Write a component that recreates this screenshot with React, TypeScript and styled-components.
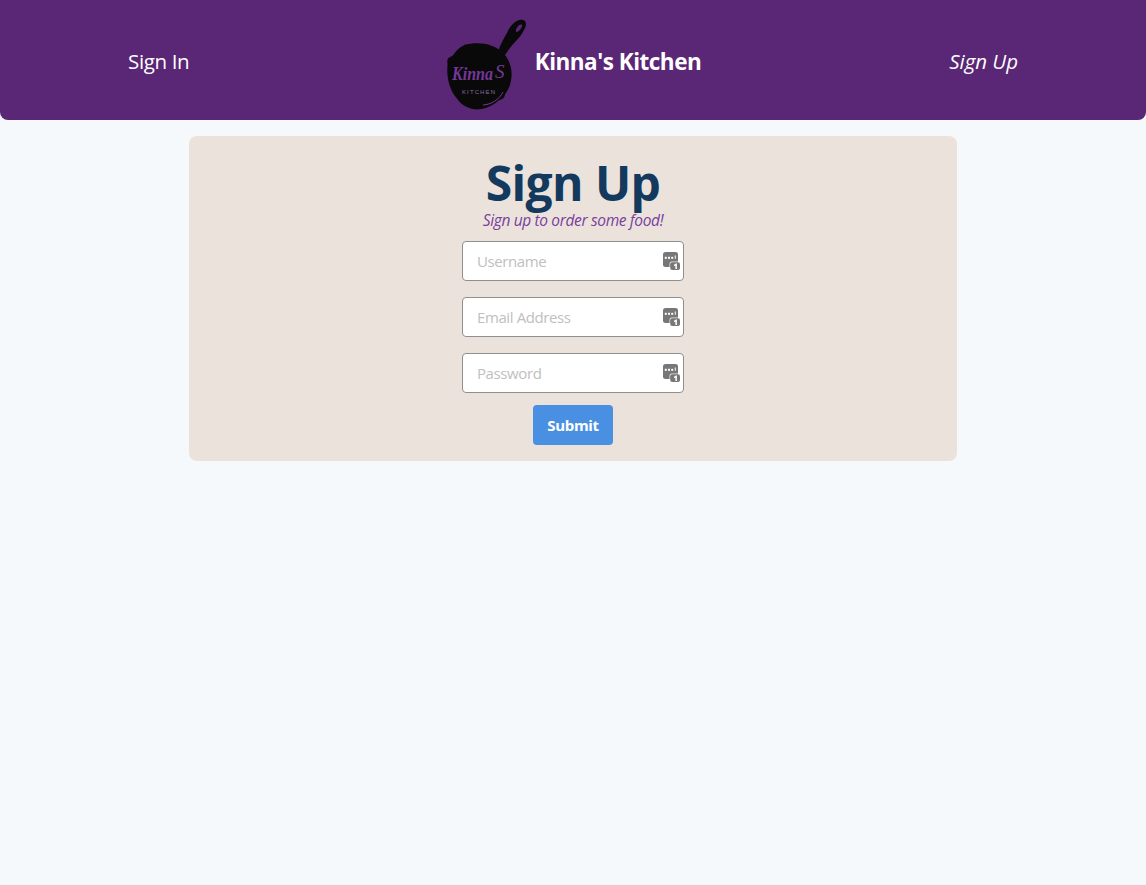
import React from "react";
import styled, { createGlobalStyle } from "styled-components";

const Global = createGlobalStyle`
  html, body { margin: 0; padding: 0; background: #f5f9fc; }
  body { font-family: "Open Sans", "Noto Sans", "Liberation Sans", sans-serif; }
  * { box-sizing: border-box; }
`;

const Page = styled.div`
  min-height: 885px;
  background: #f5f9fc;
  display: flex;
  flex-direction: column;
  align-items: center;
`;

const Header = styled.header`
  width: 100%;
  height: 120px;
  background: #5a2676;
  border-radius: 0 0 8px 8px;
  padding: 2px 128px 0;
  display: grid;
  grid-template-columns: 1fr auto 1fr;
  align-items: center;
`;

const NavLink = styled.a<{ $italic?: boolean; $end?: boolean }>`
  color: #ffffff;
  font-size: 20.5px;
  letter-spacing: ${(p) => (p.$italic ? "-0.05px" : "-0.35px")};
  font-style: ${(p) => (p.$italic ? "italic" : "normal")};
  justify-self: ${(p) => (p.$end ? "end" : "start")};
`;

const Brand = styled.div`
  display: flex;
  align-items: center;
  gap: 8px;
`;

const BrandName = styled.span`
  color: #ffffff;
  font-size: 22.5px;
  font-weight: 700;
  letter-spacing: -0.5px;
`;

const LogoArt = styled.svg`
  display: block;
  width: 82px;
  height: 94px;
  margin-top: 8px;
`;

const Card = styled.main`
  width: 768px;
  margin-top: 16px;
  background: #ebe3db;
  border-radius: 8px;
  padding: 20px 0 16px;
  display: flex;
  flex-direction: column;
  align-items: center;
`;

const Title = styled.h1`
  margin: 0;
  color: #133a5e;
  font-size: 48px;
  font-weight: 700;
  line-height: 54px;
  letter-spacing: -0.6px;
`;

const Subtitle = styled.p`
  margin: 0;
  color: #7a3ea0;
  font-size: 15.5px;
  font-style: italic;
  line-height: 20px;
  letter-spacing: -0.35px;
`;

const Form = styled.form`
  margin-top: 11px;
  display: flex;
  flex-direction: column;
  align-items: center;
  gap: 16px;
`;

const Field = styled.div`
  position: relative;
  width: 222px;
  height: 40px;
`;

const Input = styled.input`
  width: 100%;
  height: 100%;
  padding: 0 32px 0 14px;
  background: #ffffff;
  border: 1px solid #8f8f8f;
  border-radius: 4px;
  font-family: inherit;
  font-size: 15px;
  letter-spacing: -0.4px;
  outline: none;
  &::placeholder { color: #c0c0c0; opacity: 1; }
`;

const KeyBadge = styled.svg`
  position: absolute;
  top: 10px;
  right: 4px;
  width: 17px;
  height: 19px;
`;

const Submit = styled.button`
  width: 80px;
  height: 40px;
  margin-top: -4px;
  background: #4a90e2;
  color: #ffffff;
  border: none;
  border-radius: 4px;
  font-family: inherit;
  font-size: 15px;
  font-weight: 700;
  letter-spacing: -0.3px;
`;

const PassIcon = () => (
  <KeyBadge viewBox="0 0 17 19" aria-hidden="true">
    <rect x="0" y="1" width="15" height="15" rx="2.5" fill="#777777" />
    <rect x="1.8" y="5.8" width="2" height="2" fill="#ffffff" />
    <rect x="5" y="5.8" width="2" height="2" fill="#ffffff" />
    <rect x="8.2" y="5.8" width="2" height="2" fill="#ffffff" />
    <rect x="11.8" y="4.5" width="1" height="3.3" fill="#ffffff" />
    <rect x="6.5" y="10.5" width="10.5" height="8.5" rx="2.2" fill="#ffffff" fillOpacity="0.8" />
    <rect x="7.2" y="11.2" width="9.8" height="7.8" rx="2" fill="#777777" />
    <path d="M11 13.8l1.9-1.2h1v5.4h-1.5v-3.5l-1.4.8z" fill="#ffffff" />
  </KeyBadge>
);

const Logo = () => (
  <LogoArt viewBox="0 0 82 94" aria-hidden="true">
    <path
      fillRule="evenodd"
      d="M53 34C55 27 59 20 62 15 64 10 67 6 71 3.500 74 1.500 78 1 80 3 81.500 5 81 9 79 12 77 16 74 20 71 23 67 27 64 31 60 37Z M75.500 6.500C73.500 7 71 10.500 70.800 12.500 70.700 14 72 14.300 73.500 13.200 75.500 11.500 77.200 9.200 77.200 7.800 77.200 6.800 76.500 6.300 75.500 6.500Z"
      fill="#090909"
    />
    <path
      transform="translate(-3.3 0) scale(1.05 1)"
      d="M21 27c7-2 15-2.500 21-1 8 2 15 6 19 12 4 6 6 13 5.500 20-.5 8-2.500 13-6 18-.8 2-.8 4-2.800 5-1.800 1-3 .6-4.700 2.500-3 3-7 5-11 6.500-6 2-12 2-17-.5-4-1.500-8-5-10.500-9-3.500-4-6-9-7.500-15-1.500-6-2-12-1.500-18 .3-2-.8-4.500.5-7 1.500-1.800 3.500-1.800 5-3.500 3-4.500 6-8 10-9.500z"
      fill="#090909"
    />
    <text
      x="7"
      y="62"
      fill="#76379a"
      fontFamily="'Liberation Serif', serif"
      fontStyle="italic"
      fontWeight="700"
      fontSize="19"
      textLength="41"
      lengthAdjust="spacingAndGlyphs"
    >
      Kinna
    </text>
    <text x="50" y="60" fill="#76379a" fontFamily="'Liberation Serif', serif" fontStyle="italic" fontSize="19">
      S
    </text>
    <text
      x="17"
      y="76"
      fill="#8d6aa3"
      fontFamily="'Liberation Sans', sans-serif"
      fontSize="6"
      textLength="33"
    >
      KITCHEN
    </text>
    <path d="M38 87c8-.5 16-5 20-13" stroke="#76379a" strokeWidth="1" fill="none" />
  </LogoArt>
);

export default function App() {
  return (
    <Page>
      <Global />
      <Header>
        <NavLink>Sign In</NavLink>
        <Brand>
          <Logo />
          <BrandName>Kinna's Kitchen</BrandName>
        </Brand>
        <NavLink $italic $end>
          Sign Up
        </NavLink>
      </Header>
      <Card>
        <Title>Sign Up</Title>
        <Subtitle>Sign up to order some food!</Subtitle>
        <Form>
          {["Username", "Email Address", "Password"].map((p) => (
            <Field key={p}>
              <Input placeholder={p} />
              <PassIcon />
            </Field>
          ))}
          <Submit type="button">Submit</Submit>
        </Form>
      </Card>
    </Page>
  );
}
